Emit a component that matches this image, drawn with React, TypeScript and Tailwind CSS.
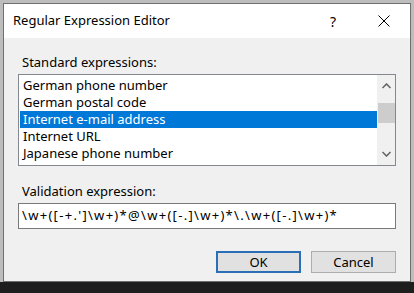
import React from "react";

const items = [
  "German phone number",
  "German postal code",
  "Internet e-mail address",
  "Internet URL",
  "Japanese phone number",
];

export default function App() {
  const font = { fontFamily: '"Noto Sans", "Open Sans", Arial, sans-serif' };
  return (
    <div className="w-[414px] h-[293px] bg-[#bdbdbd] flex flex-col overflow-hidden" style={font}>
      <div className="pl-[3px] pt-[3px] pr-[3px]">
        <div className="w-[408px] h-[279px] border border-[#6f6f6f] bg-[#f0f0f0] flex flex-col">
          {/* title bar */}
          <div className="h-[34px] bg-white flex items-center pl-[9px] text-[13px] text-black">
            <span className="flex-1">Regular Expression Editor</span>
            <span className="w-[20px] text-center text-[14px] mr-[35px]">?</span>
            <svg width="12" height="12" viewBox="0 0 12 12" className="mr-[20px]">
              <path d="M0.5 0.5 L11.5 11.5 M11.5 0.5 L0.5 11.5" stroke="#000" strokeWidth="1" />
            </svg>
          </div>
          {/* body */}
          <div className="flex flex-col px-[14px] pt-[14px] text-[13px] text-black">
            <div className="h-[20px] leading-[20px] pl-[4px]">Standard expressions:</div>
            <div className="mt-[2px] h-[92px] border border-[#828790] bg-white flex">
              <div className="flex-1 flex flex-col pt-[2px] pl-[1px]">
                {items.map((t, i) => (
                  <div
                    key={t}
                    className={
                      "h-[17px] leading-[17px] pl-[3px] " +
                      (i === 2 ? "bg-[#0078d7] text-white" : "")
                    }
                  >
                    {t}
                  </div>
                ))}
              </div>
              <div className="w-[18px] bg-[#f0f0f0] flex flex-col items-center">
                <div className="h-[22px] flex items-center justify-center">
                  <svg width="9" height="6" viewBox="0 0 9 6">
                    <path d="M0.5 5 L4.5 1 L8.5 5" fill="none" stroke="#606060" strokeWidth="1.5" />
                  </svg>
                </div>
                <div className="w-[17px] h-[20px] mt-[6px] bg-[#cdcdcd]" />
                <div className="flex-1" />
                <div className="h-[22px] flex items-center justify-center">
                  <svg width="9" height="6" viewBox="0 0 9 6">
                    <path d="M0.5 1 L4.5 5 L8.5 1" fill="none" stroke="#606060" strokeWidth="1.5" />
                  </svg>
                </div>
              </div>
            </div>
            <div className="mt-[15px] h-[20px] leading-[20px] pl-[4px]">Validation expression:</div>
            <div className="mt-[2px] h-[26px] border border-[#7a7a7a] bg-white flex items-center pl-[3px] whitespace-nowrap overflow-hidden tracking-[1.3px]">
              {"\\w+([-+.']\\w+)*@\\w+([-.]\\w+)*\\.\\w+([-.]\\w+)*"}
            </div>
            <div className="mt-[22px] flex justify-end gap-[10px]">
              <button className="w-[85px] h-[22px] border-2 border-[#2a6fb5] bg-[#e1e1e1] text-[13px] leading-none">
                OK
              </button>
              <button className="w-[85px] h-[22px] border border-[#adadad] bg-[#e1e1e1] text-[13px] leading-none">
                Cancel
              </button>
            </div>
          </div>
        </div>
      </div>
      <div className="flex-1 bg-[#1e1e1e]" />
    </div>
  );
}
